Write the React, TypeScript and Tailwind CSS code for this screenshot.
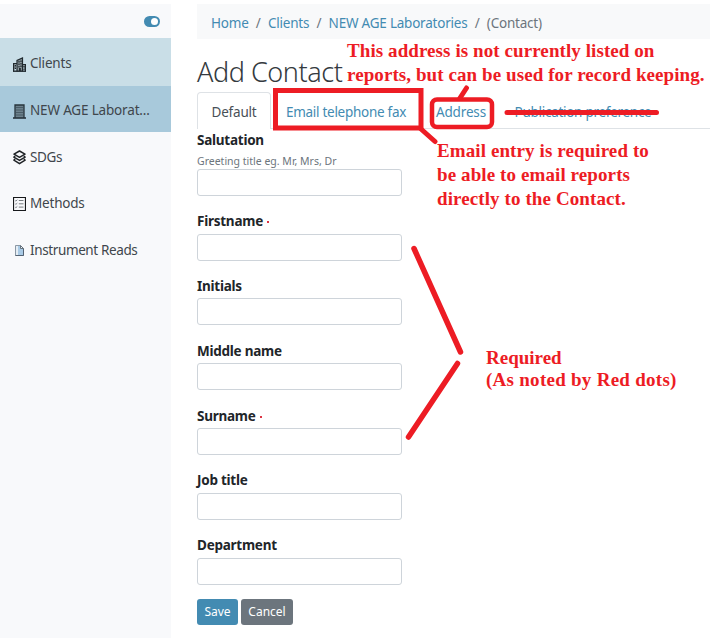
import type { ReactNode } from "react";

function CityIcon() {
  return (
    <svg width="13" height="15" viewBox="0 0 13 15" fill="none" stroke="#20292e" strokeWidth="1.200">
      <path d="M4 14.500V3.500L9.500 1v13.500M.6 14.500V6.500H4M9.500 7.500h2.900v7" fill="#8b989e" />
      <path d="M0 14.200h13" strokeWidth="1.400" />
      <path d="M6 4v7M8 3.500v7.500" strokeDasharray="1.500 1" />
      <path d="M2.400 8v5M11 9v4" strokeDasharray="1.500 1" />
      <path d="M6.900 11v3" strokeWidth="1.800" />
    </svg>
  );
}

function BuildingIcon() {
  return (
    <svg width="13" height="15" viewBox="0 0 13 15" fill="none" stroke="#27343c">
      <path d="M2 14V1h9v13" fill="#6c818d" strokeWidth="1.300" />
      <path d="M3 3.500h7M3 6h7M3 8.500h7M3 11h7" stroke="#4a5c67" />
      <path d="M0 14h13" strokeWidth="1.600" />
    </svg>
  );
}

function LayersIcon() {
  return (
    <svg width="13" height="15" viewBox="0 0 13 15" fill="none" stroke="#202427" strokeWidth="1.500" strokeLinejoin="round">
      <path d="M6.500 1L12 4.200 6.500 7.300 1 4.200z" />
      <path d="M2.200 6.200L.9 7.200l5.600 3.200 5.600-3.200-1.300-1M2.200 9.200l-1.300.9 5.600 3.600 5.600-3.600-1.300-.9" />
    </svg>
  );
}

function ListIcon() {
  return (
    <svg width="13" height="14" viewBox="0 0 13 14" fill="none" stroke="#17191b">
      <path d="M.5.5h12v13H.5z" strokeWidth="1.200" />
      <path d="M5.800 3.500H10.500M5.800 6.800H10.500M5.800 10.100H10.500" stroke="#777c80" />
      <path d="M2.200 3.500l.7.600L4.300 2.800M2.200 6.800l.7.600 1.400-1.300M2.200 10.100l.7.600 1.400-1.300" stroke="#6b7176" strokeWidth=".9" />
    </svg>
  );
}

function DocumentIcon() {
  return (
    <svg width="13" height="13" viewBox="0 0 13 13" fill="none">
      <path d="M2.500 1.500h5l3 3v7h-8z" fill="#a9cae5" stroke="#8b98a4" />
      <path d="M3 2h2v9H3z" fill="#e4edf4" />
      <path d="M10.500 4.500v7h-8" stroke="#536272" />
      <path d="M7.500 1.500v3h3z" fill="#f0f4f8" stroke="#65727d" />
    </svg>
  );
}

function NavRow({ icon, label, className = "" }: { icon: ReactNode; label: string; className?: string }) {
  return (
    <a className={`flex items-center gap-[4px] pt-[3px] pl-[13px] text-[#3f464c] ${className}`}>
      <span className="mt-[1px] shrink-0">{icon}</span>
      <span className="whitespace-nowrap">{label}</span>
    </a>
  );
}

function Field({ label, hint, required }: { label: string; hint?: string; required?: boolean }) {
  return (
    <div className={hint ? "h-[81.200px]" : "h-[64.800px]"}>
      <div className={`text-[13.500px] leading-[20px] font-bold tracking-[-0.25px] text-[#212529] ${hint ? "h-[20px]" : "h-[22.500px]"}`}>
        {label}
        {required && <span className="ml-[4px] inline-block h-[2px] w-[2px] bg-[#dc3545] align-[3px]" />}
      </div>
      {hint && <div className="mb-[1px] h-[18px] text-[10.500px] leading-[22px] whitespace-nowrap text-[#6c757d]">{hint}</div>}
      <input className="block h-[27px] w-[205px] rounded-[3px] border border-[#ced4da] bg-white" />
    </div>
  );
}

export default function App() {
  return (
    <div className="relative flex h-[638px] w-[710px] overflow-hidden bg-white pt-1 font-['Noto_Sans','Segoe_UI',sans-serif] text-[13.500px]">
      <aside className="mr-[26px] w-[171px] shrink-0 bg-[#f8f9fb]">
        <div className="flex h-[34px] items-center justify-end pr-[11px] pt-[1px]">
          <span className="flex h-[11px] w-[16px] items-center justify-end rounded-full bg-[#438bb2] p-[2px]">
            <span className="h-[7px] w-[7px] rounded-full bg-white" />
          </span>
        </div>
        <nav className="tracking-[-0.38px]">
          <NavRow icon={<CityIcon />} label="Clients" className="h-[48px] bg-[#c9dee7] tracking-[-0.2px]" />
          <NavRow icon={<BuildingIcon />} label="NEW AGE Laborat..." className="h-[46px] bg-[#a8c9db] tracking-[-0.17px]" />
          <NavRow icon={<LayersIcon />} label="SDGs" className="h-[46.600px]" />
          <NavRow icon={<ListIcon />} label="Methods" className="h-[46.600px] tracking-[-0.2px]" />
          <NavRow icon={<DocumentIcon />} label="Instrument Reads" className="h-[46.600px]" />
        </nav>
      </aside>

      <main className="min-w-0 flex-1">
        <div className="flex h-[35px] items-center gap-[7.300px] bg-[#f8f9fa] pt-[4px] pl-[14px] tracking-[-0.22px] whitespace-nowrap text-[#438bb2]">
          <a>Home</a>
          <span className="text-[#6c757d]">/</span>
          <a>Clients</a>
          <span className="text-[#6c757d]">/</span>
          <a>NEW AGE Laboratories</a>
          <span className="text-[#6c757d]">/</span>
          <span className="text-[#6c757d]">(Contact)</span>
        </div>
        <h1 className="h-[53px] pt-[15px] text-[27px] leading-[36px] font-light tracking-[-0.45px] whitespace-nowrap text-[#343a40]">Add Contact</h1>
        <div className="flex h-[37px] border-b border-[#dee2e6] tracking-[-0.28px] whitespace-nowrap text-[#438bb2]">
          <a className="flex h-[37px] w-[74px] items-center justify-center rounded-t-[4px] border border-b-0 border-[#dee2e6] bg-white pt-[3px] tracking-[-0.2px] text-[#495057]">Default</a>
          <a className="flex w-[150px] items-center justify-center pt-[4px]">Email telephone fax</a>
          <a className="flex w-[80px] items-center justify-center pt-[4px] tracking-[-0.15px]">Address</a>
          <a className="flex w-[164px] items-center justify-center pt-[4px]">Publication preference</a>
        </div>
        <form className="pt-[1px]">
          <Field label="Salutation" hint="Greeting title eg. Mr, Mrs, Dr" />
          <Field label="Firstname" required />
          <Field label="Initials" />
          <Field label="Middle name" />
          <Field label="Surname" required />
          <Field label="Job title" />
          <Field label="Department" />
          <div className="-mt-[1px] flex gap-[3px] text-[12px] text-white">
            <button type="button" className="h-[26px] w-[41px] rounded-[3px] bg-[#438bb2]">Save</button>
            <button type="button" className="h-[26px] w-[52px] rounded-[3px] bg-[#6c757d]">Cancel</button>
          </div>
        </form>
      </main>

      <svg className="pointer-events-none absolute inset-0" width="710" height="638" fill="none" stroke="#ed1c24" strokeWidth="5" strokeLinecap="round">
        <path d="M275.500 90.500h145.500v37.500h-145.500z" />
        <rect x="432" y="99.500" width="60" height="27.500" rx="5" strokeWidth="4.500" />
        <path d="M466.500 88l-6.500 10M421 129l14 12.500M507 112.500H656.500" />
        <path d="M414 248.500L460.500 352M457.500 363.500L408.500 437" strokeWidth="5.500" />
      </svg>
      <div className="absolute top-[39px] left-[347px] font-['Liberation_Serif',serif] text-[19px] leading-[24px] font-bold tracking-[0.08px] whitespace-nowrap text-[#ed1c24]">
        <div>This address is not currently listed on</div>
        <div>reports, but can be used for record keeping.</div>
      </div>
      <div className="absolute top-[139px] left-[437px] font-['Liberation_Serif',serif] text-[19px] leading-[24px] font-bold tracking-[0.1px] whitespace-nowrap text-[#ed1c24]">
        <div>Email entry is required to</div>
        <div>be able to email reports</div>
        <div>directly to the Contact.</div>
      </div>
      <div className="absolute top-[347px] left-[486px] font-['Liberation_Serif',serif] text-[19px] leading-[22px] font-bold whitespace-nowrap text-[#ed1c24]">
        <div>Required</div>
        <div className="tracking-[0.27px]">(As noted by Red dots)</div>
      </div>
    </div>
  );
}
